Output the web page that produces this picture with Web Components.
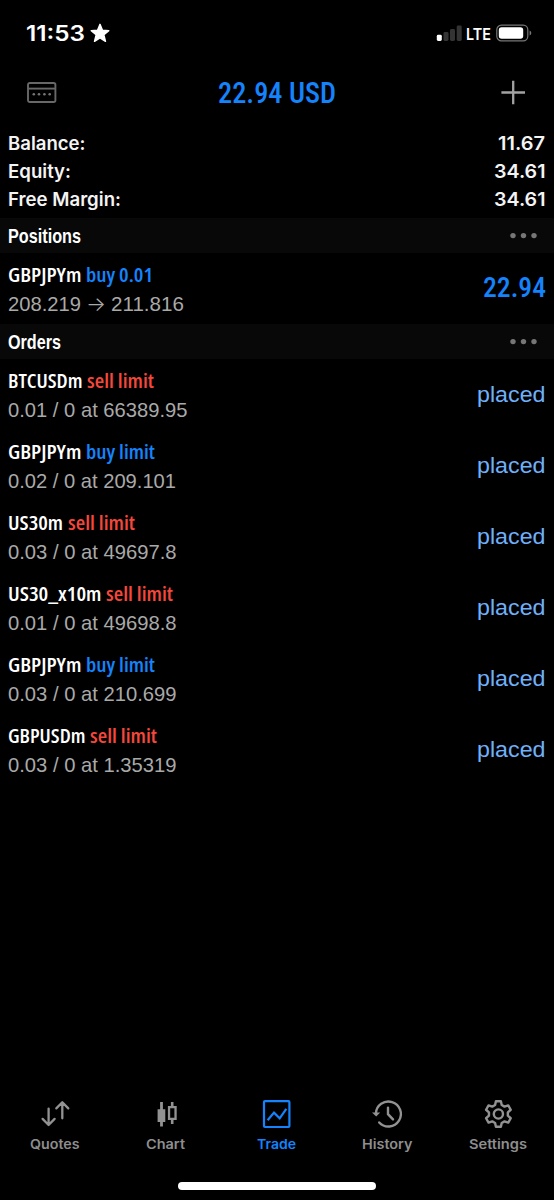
<!DOCTYPE html>
<html lang="en">
<head>
<meta charset="utf-8">
<title>Trade</title>
<style>
html,body{margin:0;background:#000}
body{width:554px;height:1200px;overflow:hidden;font-family:Inter,sans-serif;color:#fff}
</style>
</head>
<body>
<trade-app></trade-app>
<script>
const define=(name,html,setup)=>customElements.define(name,class extends HTMLElement{
  connectedCallback(){
    if(this.shadowRoot)return;
    const root=this.attachShadow({mode:'open'});
    const t=document.createElement('template');
    t.innerHTML=typeof html==='function'?html(this):html;
    root.append(t.content.cloneNode(true));
    if(setup)setup(this,root);
  }
});

/* Text squeezed or stretched to a given advance width */
define('fit-text',el=>`<style>
:host{display:block;flex:none;width:${el.getAttribute('w')}px;white-space:nowrap}
span{display:inline-block;transform-origin:0 50%}
:host([face=cond]){font-family:"Open Sans",sans-serif;font-weight:600;font-stretch:75%}
:host([face=num]){font-family:Roboto,sans-serif;font-weight:500;font-stretch:75%}
:host([face=head]){font-family:"Liberation Sans",sans-serif;font-weight:700}
:host([face=plain]){font-family:"Liberation Sans",sans-serif}
:host([face=arrow]){font-family:Inter,sans-serif;font-weight:300}
</style><span>${el.getAttribute('text')}</span>`,(el,root)=>{
  const s=root.querySelector('span');
  s.style.transform=`scaleX(${+el.getAttribute('w')/s.getBoundingClientRect().width})`;
});

define('status-bar',`<style>
:host{display:flex;height:66px;box-sizing:border-box;padding:0 22px 0 26px;align-items:center;font-weight:600}
.time{font-size:21px;line-height:28px;margin-top:1px}
.star{margin-left:5px;margin-top:-1px}
.lte{font-size:16.3px;line-height:28px;margin-left:4px;margin-top:1px}
.bat{margin-left:5px}
i{flex:1}
</style>
<fit-text class="time" w="59" text="11:53"></fit-text>
<svg class="star" width="20" height="20" viewBox="0 0 20 20"><path d="M10 1.3l2.5 6 6.3.4-4.9 4.1 1.6 6.5L10 14.8l-5.5 3.5 1.6-6.5-4.9-4.1 6.3-.4z" fill="#fff" stroke="#fff" stroke-width="1.4" stroke-linejoin="round"/></svg>
<i></i>
<svg width="26" height="18" viewBox="0 0 26 18"><rect x=".8" y="10.8" width="5" height="6.2" rx="1.4" fill="#fff"/><rect x="7.5" y="8" width="5" height="9" rx="1.4" fill="#343434"/><rect x="14" y="5" width="5" height="12" rx="1.4" fill="#343434"/><rect x="20.7" y="1.5" width="5" height="15.5" rx="1.4" fill="#343434"/></svg>
<fit-text class="lte" w="25" text="LTE"></fit-text>
<svg class="bat" width="36" height="18" viewBox="0 0 36 18"><rect x=".8" y="1.2" width="31" height="15.6" rx="4.6" fill="none" stroke="#777" stroke-width="1.2"/><rect x="2.8" y="3.2" width="24.4" height="11.6" rx="2.8" fill="#fff"/><path d="M33.6 6.6q1.7.8 1.7 2.4t-1.7 2.4z" fill="#777"/></svg>`);

define('nav-bar',`<style>
:host{display:flex;height:53px;padding:0 28px 0 27px;align-items:center;justify-content:space-between}
fit-text{font-size:29.2px;line-height:40px;color:#1583fc;margin-right:4px}
svg{display:block}
</style>
<svg width="30" height="22" viewBox="0 0 30 22"><g fill="none" stroke="#686868" stroke-width="1.9"><rect x="1" y="1" width="27.4" height="19" rx="1.8"/><path d="M1 6.6h27.4"/></g><g fill="#757575"><circle cx="6.8" cy="12.2" r="1.3"/><circle cx="12" cy="12.2" r="1.3"/><circle cx="17.4" cy="12.2" r="1.3"/><circle cx="22.7" cy="12.2" r="1.3"/></g></svg>
<fit-text face="num" w="118" text="22.94 USD"></fit-text>
<svg width="25" height="25" viewBox="0 0 25 25"><path d="M12.2.7v23.6M.4 12.5H24" stroke="#a2a2a2" stroke-width="2.3"/></svg>`);

define('account-line',el=>`<style>
:host{display:flex;height:28px;padding:0 9px 0 8px;justify-content:space-between;font-size:18.6px;line-height:28px;font-weight:600;color:#f4f4f4}
</style><fit-text w="${el.getAttribute('lw')}" text="${el.getAttribute('label')}"></fit-text><fit-text w="${el.getAttribute('vw')}" text="${el.getAttribute('value')}"></fit-text>`);

define('section-head',el=>`<style>
:host{display:flex;height:35px;padding:0 16px 0 8px;align-items:center;justify-content:space-between;background:#080808}
fit-text{font-size:19.8px;line-height:33px;padding-top:2px}
</style><fit-text face="head" w="${el.getAttribute('w')}" text="${el.getAttribute('label')}"></fit-text>
<svg width="28" height="8" viewBox="0 0 28 8"><g fill="#777"><circle cx="3" cy="3.6" r="2.7"/><circle cx="13.5" cy="3.6" r="2.7"/><circle cx="24" cy="3.6" r="2.7"/></g></svg>`);

define('trade-row',`<style>
:host{display:flex;box-sizing:border-box;height:71px;padding:0 8.5px 0 8px;align-items:center;justify-content:space-between}
.left{display:flex;flex-direction:column}
.name,.detail{display:flex;line-height:29px;height:29px}
.name{font-size:19.3px;gap:4.5px}
.detail{font-size:19.8px;color:#a9a9a9;gap:5px;line-height:31px}
</style>
<div class="left"><div class="name"><slot name="name"></slot></div><div class="detail"><slot></slot></div></div>
<slot name="end"></slot>`);

define('order-row',el=>{const a=n=>el.getAttribute(n),buy=a('side').startsWith('buy');return `<style>
:host{display:block}
.buy{color:#1583fc}.sell{color:#f5473b}.end{font-size:22.8px;line-height:34px;padding-bottom:2px;color:#6fb0fa}
</style><trade-row><fit-text slot="name" face="cond" w="${a('nw')}" text="${a('name')}"></fit-text><fit-text slot="name" class="${buy?'buy':'sell'}" face="cond" w="${buy?69:67}" text="${a('side')}"></fit-text><fit-text face="plain" w="${a('dw')}" text="${a('detail')}"></fit-text><fit-text slot="end" class="end" face="plain" w="68.5" text="placed"></fit-text></trade-row>`});

/* Six-tooth gear outline around (14.4, 15) */
const gear=()=>{
  const pts=[];
  for(let k=0;k<6;k++){
    const a=k*Math.PI/3,c=Math.cos(a),s=Math.sin(a);
    for(const [x,y] of [[-3.3,-9],[-2.5,-12.8],[2.5,-12.8],[3.3,-9]])
      pts.push((14.4+x*c-y*s).toFixed(2)+' '+(15+x*s+y*c).toFixed(2));
  }
  return 'M'+pts.join('L')+'Z';
};

const icons={
Quotes:'<g fill="none" stroke="#929292" stroke-width="2.3" stroke-linecap="round" stroke-linejoin="round"><path d="M8.6 9.6v16M2.6 19.9l6 6.1 6-6.1M22.3 19.3v-16M16.3 9.4l6-6.1 6 6.1"/></g>',
Chart:'<path d="M9.1 2.9h2.8v7.4h2.4v12.6h-2.4v4.6H9.1v-4.6H6.6V10.3h2.5z" fill="#929292"/><path d="M19.9 2.9h2.6V7h3.2v14h-3.2v4h-2.6v-4h-3V7h3zM19.2 9.3v9.4h4.2V9.3z" fill="#929292" fill-rule="evenodd"/>',
Trade:'<g fill="none" stroke="#1583fc"><rect x="2" y="2.2" width="25.4" height="25.8" rx="1" stroke-width="2.2"/><path d="M5.6 21.2l6.4-7.6 5.7 5.7 6.6-9.5" stroke-width="2.2"/></g>',
History:'<g fill="none" stroke="#929292" stroke-width="2.4" stroke-linecap="round"><path d="M2.9 14.6A12.5 12.5 0 1 1 6.2 23.5"/><path d="M15 8.6v6.6l5 5.2"/></g><path d="M-1 13.4h8.2L3.2 17.6z" fill="#929292"/>',
Settings:`<g fill="none" stroke="#929292" stroke-width="2.4" stroke-linejoin="round"><path d="${gear()}"/><circle cx="14.4" cy="15" r="4.6"/></g>`};

define('tab-item',el=>`<style>
:host{display:flex;flex:1;flex-direction:column;align-items:center;font-size:13.2px;line-height:20px;font-weight:600;color:#8e8e8e}
:host([active]){color:#1583fc}
svg{display:block;margin-bottom:5px;overflow:visible}
fit-text{margin-right:.5px}
</style><svg width="30" height="30" viewBox="0 0 30 30">${icons[el.getAttribute('label')]}</svg><fit-text w="${el.getAttribute('w')}" text="${el.getAttribute('label')}"></fit-text>`);

define('tab-bar',`<style>:host{display:flex;height:83px}</style>
<tab-item label="Quotes" w="49.5"></tab-item><tab-item label="Chart" w="39"></tab-item><tab-item active label="Trade" w="39"></tab-item><tab-item label="History" w="50.5"></tab-item><tab-item label="Settings" w="58"></tab-item>`);

define('trade-app',`<style>
:host{display:flex;flex-direction:column;width:554px;height:1200px;background:#000}
.account{padding:10px 0 5px}
main{flex:1}
.pl{font-size:27.3px;line-height:38px;padding-bottom:1px;color:#1583fc}
.buy{color:#1583fc}
.home{width:198px;height:8px;border-radius:4px;background:#fff;margin:0 auto 10px}
</style>
<status-bar></status-bar>
<nav-bar></nav-bar>
<main>
<div class="account">
<account-line label="Balance:" lw="77.5" value="11.67" vw="47"></account-line>
<account-line label="Equity:" lw="63" value="34.61" vw="51.5"></account-line>
<account-line label="Free Margin:" lw="113" value="34.61" vw="51.5"></account-line>
</div>
<section-head label="Positions" w="73"></section-head>
<trade-row>
<fit-text slot="name" face="cond" w="73.5" text="GBPJPYm"></fit-text><fit-text slot="name" class="buy" face="cond" w="67" text="buy 0.01"></fit-text>
<fit-text face="plain" w="73" text="208.219"></fit-text><fit-text face="arrow" w="20" text="→"></fit-text><fit-text face="plain" w="73" text="211.816"></fit-text>
<fit-text slot="end" class="pl" face="num" w="63" text="22.94"></fit-text>
</trade-row>
<section-head label="Orders" w="53"></section-head>
<order-row name="BTCUSDm" nw="74.5" side="sell limit" detail="0.01 / 0 at 66389.95" dw="179.5"></order-row>
<order-row name="GBPJPYm" nw="73.5" side="buy limit" detail="0.02 / 0 at 209.101" dw="168"></order-row>
<order-row name="US30m" nw="55" side="sell limit" detail="0.03 / 0 at 49697.8" dw="168.5"></order-row>
<order-row name="US30_x10m" nw="93.5" side="sell limit" detail="0.01 / 0 at 49698.8" dw="168.5"></order-row>
<order-row name="GBPJPYm" nw="73.5" side="buy limit" detail="0.03 / 0 at 210.699" dw="168.5"></order-row>
<order-row name="GBPUSDm" nw="77.5" side="sell limit" detail="0.03 / 0 at 1.35319" dw="168.5"></order-row>
</main>
<tab-bar></tab-bar>
<div class="home"></div>`);
</script>
</body>
</html>
